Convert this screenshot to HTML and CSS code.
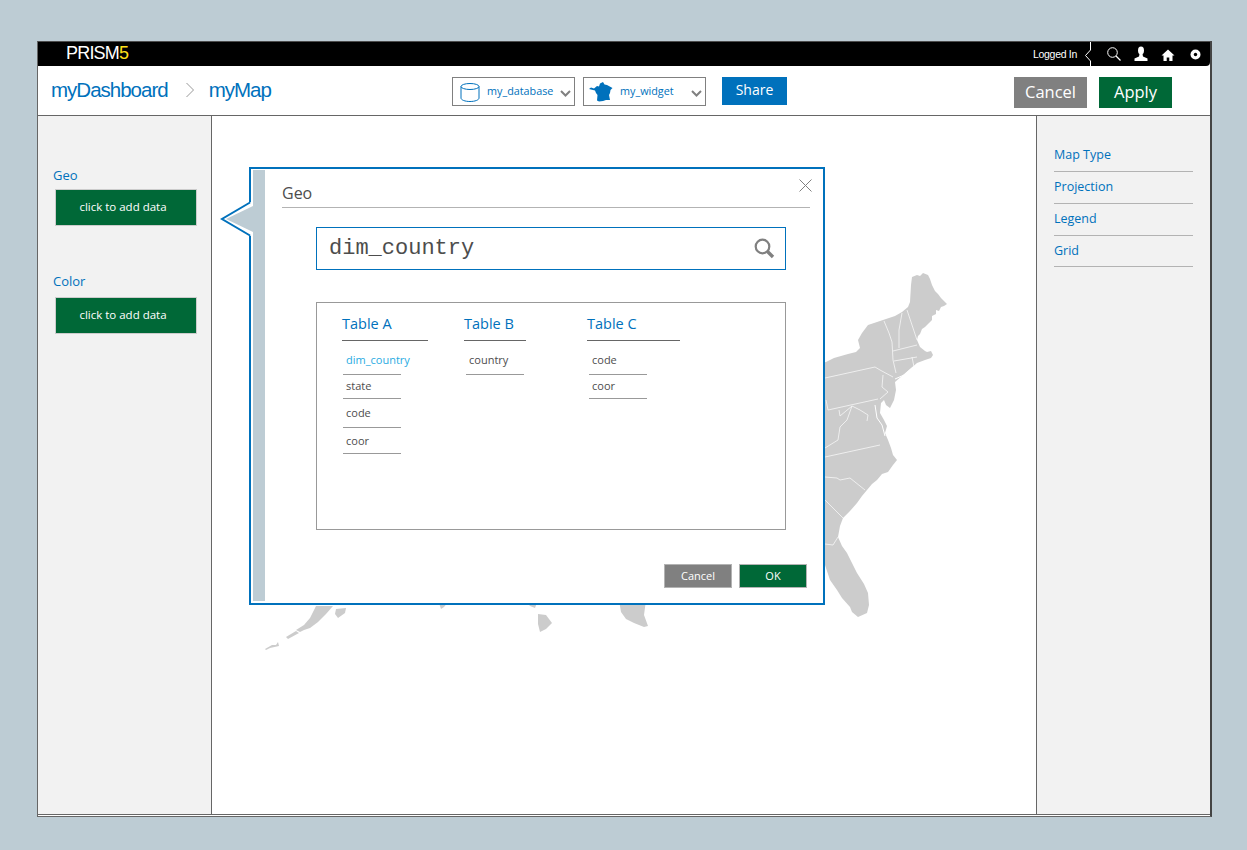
FILE: index.html
```html
<!DOCTYPE html>
<html lang="en">
<head>
    <meta charset="UTF-8">
    <title>myMap - PRISM5</title>
    <link rel="stylesheet" href="styles.css">
</head>
<body>

<div class="app">
    <div class="topbar">
        <div class="logo">PRISM<span class="logo-num">5</span></div>
        <div class="topbar-right">
            <span class="logged">Logged In</span>
            <svg class="notch" width="8" height="24" viewBox="0 0 8 24"><path d="M6.5 0V8L1.5 13.5L6.5 19V24" fill="none" stroke="#fff"/></svg>
            <svg class="top-icon search-top" width="16" height="16" viewBox="0 0 16 16"><circle cx="6.5" cy="6.5" r="4.8" fill="none" stroke="#fff" stroke-width="1"/><path d="M10 10L14.5 14.5" stroke="#fff" stroke-width="1.2"/></svg>
            <svg class="top-icon user-top" width="14" height="16" viewBox="0 0 14 16"><ellipse cx="7" cy="4.5" rx="3" ry="4" fill="#fff"/><path d="M5.5 8H8.5L9 10.5L13.5 12.5V15H.5V12.5L5 10.5Z" fill="#fff"/></svg>
            <svg class="top-icon home-top" width="14" height="14" viewBox="0 0 14 14"><path d="M7 1.5L13.5 7.5H11.5V13H8.3V9.5H5.7V13H2.5V7.5H.5Z" fill="#fff"/></svg>
            <svg class="top-icon dot-top" width="11" height="11" viewBox="0 0 11 11"><circle cx="5.5" cy="5.5" r="5" fill="#fff"/><circle cx="5.5" cy="5.5" r="1.7" fill="#000"/></svg>
        </div>
    </div>

    <div class="toolbar">
        <div class="crumbs">
            <span class="crumb">myDashboard</span>
            <svg class="crumb-sep" width="10" height="16" viewBox="0 0 10 16"><path d="M1.5 1L8.5 8L1.5 15" fill="none" stroke="#999" stroke-width="1"/></svg>
            <span class="crumb">myMap</span>
        </div>
        <div class="select">
            <svg class="select-icon" width="20" height="20" viewBox="0 0 20 20"><ellipse cx="10" cy="4.5" rx="9" ry="3" fill="none" stroke="#0071bc"/><path d="M1 4.5V16C1 18 5 19.5 10 19.5S19 18 19 16V4.5" fill="none" stroke="#0071bc"/></svg>
            <span class="select-text">my_database</span>
            <svg class="chev" width="11" height="7" viewBox="0 0 11 7"><path d="M1 1L5.5 5.5L10 1" fill="none" stroke="#808080" stroke-width="2"/></svg>
        </div>
        <div class="select select-widget">
            <svg class="select-icon" width="24" height="20" viewBox="0 0 24 20"><path d="M0 7L2 5.500L5 6.500L8 4L10 4.500L11 1.500L14 0L15.500 2.500L18 3L23.500 6L21.500 8L21 11L20 13L21 18L17 18L14 19L10 19.500L8 18.500L8.500 13L7 11L6 8.500Z" fill="#0071bc"/></svg>
            <span class="select-text">my_widget</span>
            <svg class="chev" width="11" height="7" viewBox="0 0 11 7"><path d="M1 1L5.5 5.5L10 1" fill="none" stroke="#808080" stroke-width="2"/></svg>
        </div>
        <button class="btn-share">Share</button>
        <button class="btn-big btn-grey">Cancel</button>
        <button class="btn-big btn-green">Apply</button>
    </div>

    <div class="panels">
        <div class="left-panel">
            <div class="field-label">Geo</div>
            <button class="add-data">click to add data</button>
            <div class="field-label field-color">Color</div>
            <button class="add-data">click to add data</button>
        </div>

        <div class="main">
            <!-- map is in page coordinates, viewBox starts where .main starts -->
            <svg class="map" width="824" height="698" viewBox="212 116 824 698">
                <path fill="#ccc" d="M780 360L812 365L826 362L834 358L848 354L856 352L860 348L858 340L862 333L868 325L883 320L895 316L902 312L908 307L910 302L911 285L912 277L917 275L920 276L923 273L928 275L930 279L932 285L935 291L938 294L941 298L947 304L944 306L941 307L939 311L936 310L936 314L932 316L932 320L929 323L925 327L922 329L920 334L918 336L917 340L920 347L925 351L927 352L931 351L933 355L931 358L925 360L917 363L910 369L903 375L895 382L896 390L894 400L890 408L886 405L884 400L881 403L880 413L884 420L887 426L885 433L888 440L891 448L893 455L897 460L893 465L888 472L882 474L877 480L872 484L867 490L862 496L857 503L850 511L843 518L840 526L838 537L842 546L847 553L852 563L857 573L864 584L868 593L869 605L867 613L858 617L852 612L850 607L842 598L837 590L830 580L825 565L780 540Z"/>
                <path fill="#ccc" d="M316 606L333 606L326 614L318 622L310 628L304 630L300 632L296 630L304 625L310 618Z"/>
                <path fill="#ccc" d="M286 637L296 631L299 633L288 639Z"/>
                <path fill="#ccc" d="M265 649L272 645L276 645L278 642L279 646L270 648L266 650Z"/>
                <path fill="#ccc" d="M336 609L346 608L345 613L338 618L335 614Z"/>
                <path fill="#ccc" d="M438 600L450 600L444 607L441 609Z"/>
                <path fill="#ccc" d="M525 600L538 600L535 608L530 606Z"/>
                <path fill="#ccc" d="M538 614L546 615L552 623L546 629L540 632L538 624Z"/>
                <path fill="#ccc" d="M619 600L646 600L644 615L648 626L644 627L634 623L626 619L621 612Z"/>
                <g fill="none" stroke="#fff" stroke-width="0.8" opacity="0.85">
                    <path d="M825 378L875 367L880 370L893 377"/>
                    <path d="M826 400L828 410L878 399"/>
                    <path d="M884 321L889 333L892 342L893 360L896 373"/>
                    <path d="M902 313L899 330L899 348"/>
                    <path d="M907 310L912 325L917 340"/>
                    <path d="M893 351L917 345"/>
                    <path d="M894 361L917 357"/>
                    <path d="M912 357L914 367"/>
                    <path d="M883 375L882 387L888 392L880 399"/>
                    <path d="M839 410L840 416L852 406L860 410L868 415L867 421"/>
                    <path d="M852 406L847 420L840 427L838 440L825 448"/>
                    <path d="M825 457L880 445"/>
                    <path d="M825 477L837 478L840 480L850 478L865 490"/>
                    <path d="M825 500L835 510L843 518"/>
                    <path d="M825 544L833 545L838 537"/>
                </g>
                <g fill="none" stroke="#fff">
                    <path d="M895 379L904 375L913 367" stroke-width="1"/>
                    <path d="M875 405L877 418L882 425L885 436" stroke-width="1"/>
                </g>
            </svg>

            <div class="modal">
                <div class="modal-strip"></div>
                <div class="modal-body">
                    <div class="modal-head">
                        <span>Geo</span>
                        <svg class="close-x" width="13" height="13" viewBox="0 0 13 13"><path d="M.5 .5L12.5 12.5M12.5 .5L.5 12.5" stroke="#808080" stroke-width="1"/></svg>
                    </div>
                    <div class="search-box">
                        <span>dim_country</span>
                        <svg width="21" height="21" viewBox="0 0 21 21"><circle cx="8.5" cy="8.5" r="6.8" fill="none" stroke="#808080" stroke-width="2.2"/><path d="M13.5 13.5L19 19" stroke="#808080" stroke-width="3.4"/></svg>
                    </div>
                    <div class="table-box">
                        <div class="col">
                            <div class="col-title title-a">Table A</div>
                            <div class="row row-tall active">dim_country</div>
                            <div class="row">state</div>
                            <div class="row row-tall">code</div>
                            <div class="row">coor</div>
                        </div>
                        <div class="col col-b">
                            <div class="col-title title-b">Table B</div>
                            <div class="row row-tall">country</div>
                        </div>
                        <div class="col col-c">
                            <div class="col-title title-c">Table C</div>
                            <div class="row row-tall">code</div>
                            <div class="row">coor</div>
                        </div>
                    </div>
                    <div class="modal-foot">
                        <button class="btn-small btn-grey">Cancel</button>
                        <button class="btn-small btn-green">OK</button>
                    </div>
                </div>
                <svg class="pointer" width="34" height="40" viewBox="0 0 34 40">
                    <path d="M32 2.5L31 3L1.5 20L31 37L32 37.5Z" fill="#fff"/>
                    <path d="M33 7L34 7V33L33 33L6 20Z" fill="#bdccd4"/>
                    <path d="M30 3.5L2 20L30 36.5" fill="none" stroke="#0071bc" stroke-width="2"/>
                </svg>
            </div>
        </div>

        <div class="right-panel">
            <div class="opt">Map Type</div>
            <div class="opt">Projection</div>
            <div class="opt">Legend</div>
            <div class="opt">Grid</div>
        </div>
    </div>
</div>

</body>
</html>
```

FILE: styles.css
```css
* {
    box-sizing: border-box;
}
body {
    margin: 0;
    padding: 41px 35px 0 37px;
    height: 850px;
    overflow: hidden;
    background: #bdccd4;
    font-family: "Open Sans", Arial, sans-serif;
}
button {
    font-family: "Open Sans", Arial, sans-serif;
    color: #fff;
    border: none;
    padding: 0;
}
.app {
    width: 1175px;
    height: 776px;
    background: #fff;
    border-top: 1px solid #4d4d4d;
    border-left: 1px solid #666;
    border-right: 2px solid #444;
    border-bottom: 1px solid #666;
}

/* top black bar */
.topbar {
    height: 24px;
    background: #000;
    border-bottom-right-radius: 4px;
    display: flex;
    justify-content: space-between;
    align-items: center;
    color: #fff;
}
.logo {
    margin-left: 28px;
    margin-bottom: 2px;
    font-family: "Liberation Sans", Arial, sans-serif;
    font-size: 18px;
    letter-spacing: -0.8px;
}
.logo-num {
    color: #ffe01a;
}
.topbar-right {
    display: flex;
    align-items: center;
    height: 24px;
}
.logged {
    font-family: "Liberation Sans", Arial, sans-serif;
    font-size: 10.5px;
    letter-spacing: -0.3px;
    margin-right: 7px;
}
.top-icon {
    flex: none;
}
.search-top {
    margin-left: 14px;
}
.user-top {
    margin-left: 12px;
}
.home-top {
    margin-left: 13px;
    margin-top: 1px;
}
.dot-top {
    margin-left: 15px;
    margin-right: 9px;
}

/* toolbar */
.toolbar {
    height: 50px;
    border-bottom: 1px solid #666;
    display: flex;
    align-items: flex-start;
    padding: 11px 38px 0 13px;
}
.crumbs {
    width: 401px;
    display: flex;
    align-items: center;
    height: 26px;
}
.crumb {
    font-family: "Liberation Sans", Arial, sans-serif;
    font-size: 20.5px;
    letter-spacing: -1px;
    color: #0071bc;
}
.crumb-sep {
    margin: 0 14px 0 17px;
}
.select {
    width: 123px;
    height: 29px;
    border: 1px solid #808080;
    display: flex;
    align-items: center;
    padding-left: 7px;
    position: relative;
    margin-right: 8px;
}
.select-widget {
    padding-left: 5px;
    margin-right: 16px;
}
.select-text {
    font-size: 10.8px;
    color: #0071bc;
    margin: -2px 0 0 7px;
}
.select-widget .select-text {
    margin-left: 7px;
}
.chev {
    position: absolute;
    right: 3px;
    top: 12px;
}
.btn-share {
    width: 65px;
    height: 28px;
    padding-bottom: 3px;
    background: #0071bc;
    font-size: 14px;
}
.btn-big {
    width: 73px;
    height: 31px;
    padding-bottom: 2px;
    font-size: 16.5px;
}
.btn-grey {
    background: #808080;
}
.btn-green {
    background: #006837;
}
.toolbar .btn-grey {
    margin-left: auto;
}
.toolbar .btn-green {
    margin-left: 12px;
}

/* panels */
.panels {
    display: grid;
    grid-template-columns: 174px 824px 174px;
    height: 699px;
    border-bottom: 1px solid #666;
}
.left-panel {
    background: #f2f2f2;
    border-right: 1px solid #666;
    padding: 50px 0 0 15px;
}
.field-label {
    font-size: 13px;
    color: #0071bc;
    height: 23px;
    line-height: 18px;
}
.field-color {
    margin-top: 46px;
    height: 25px;
}
.add-data {
    display: block;
    margin-left: 2px;
    width: 142px;
    height: 37px;
    padding: 0 6px 3px 0;
    background: #006837;
    border: 1px solid #ccc;
    font-size: 11.5px;
}
.right-panel {
    background: #f2f2f2;
    border-left: 1px solid #666;
    padding: 24px 17px 0 17px;
}
.opt {
    font-size: 12.5px;
    color: #0071bc;
    height: 32px;
    line-height: 30px;
    border-bottom: 1px solid #b3b3b3;
}
.opt:last-child {
    height: 31px;
}
.main {
    position: relative;
}
.map {
    position: absolute;
    left: 0;
    top: 0;
}

/* geo popup */
.modal {
    position: absolute;
    left: 37px;
    top: 51px;
    width: 576px;
    height: 438px;
    background: #fff;
    border: 2px solid #0071bc;
    padding: 1px 0 2px 2px;
    display: flex;
}
.modal-strip {
    width: 12px;
    background: #bdccd4;
}
.modal-body {
    flex: 1;
    padding: 0 13px 0 17px;
}
.modal-head {
    height: 38px;
    border-bottom: 1px solid #b3b3b3;
    font-size: 16px;
    color: #4d4d4d;
    padding-top: 12px;
    position: relative;
}
.close-x {
    position: absolute;
    right: -2px;
    top: 9px;
}
.search-box {
    margin: 19px 0 0 34px;
    width: 470px;
    height: 43px;
    border: 1px solid #0071bc;
    display: flex;
    align-items: center;
    justify-content: space-between;
    padding: 0 10px 0 12px;
    font-family: "Liberation Mono", monospace;
    font-size: 22px;
    color: #4d4d4d;
}
.table-box {
    margin: 32px 0 0 34px;
    width: 470px;
    height: 228px;
    border: 1px solid #999;
    padding-left: 25px;
    display: flex;
}
.col {
    width: 122px;
}
.col-b {
    width: 123px;
}
.col-title {
    height: 38px;
    border-bottom: 1px solid #666;
    font-size: 14.5px;
    color: #0071bc;
    padding-top: 11px;
}
.title-a {
    width: 86px;
}
.title-b {
    width: 62px;
}
.title-c {
    width: 93px;
}
.row {
    width: 58px;
    margin-left: 1px;
    padding: 0 0 5px 3px;
    height: 24px;
    border-bottom: 1px solid #999;
    font-size: 11px;
    line-height: 15px;
    color: #4d4d4d;
    display: flex;
    align-items: flex-end;
    white-space: nowrap;
}
.col-b .row,
.col-c .row {
    margin-left: 2px;
}
.row-tall {
    height: 29px;
    padding-bottom: 7px;
}
.col .row:nth-child(2) {
    height: 34px;
}
.col .row:nth-child(5) {
    height: 26px;
}
.active {
    color: #29abe2;
}
.modal-foot {
    margin-top: 34px;
    padding-right: 3px;
    display: flex;
    justify-content: flex-end;
    gap: 7px;
}
.btn-small {
    width: 68px;
    height: 24px;
    padding-bottom: 2px;
    border: 1px solid #b3b3b3;
    font-size: 11px;
}
.pointer {
    position: absolute;
    left: -31px;
    top: 30px;
}
```
